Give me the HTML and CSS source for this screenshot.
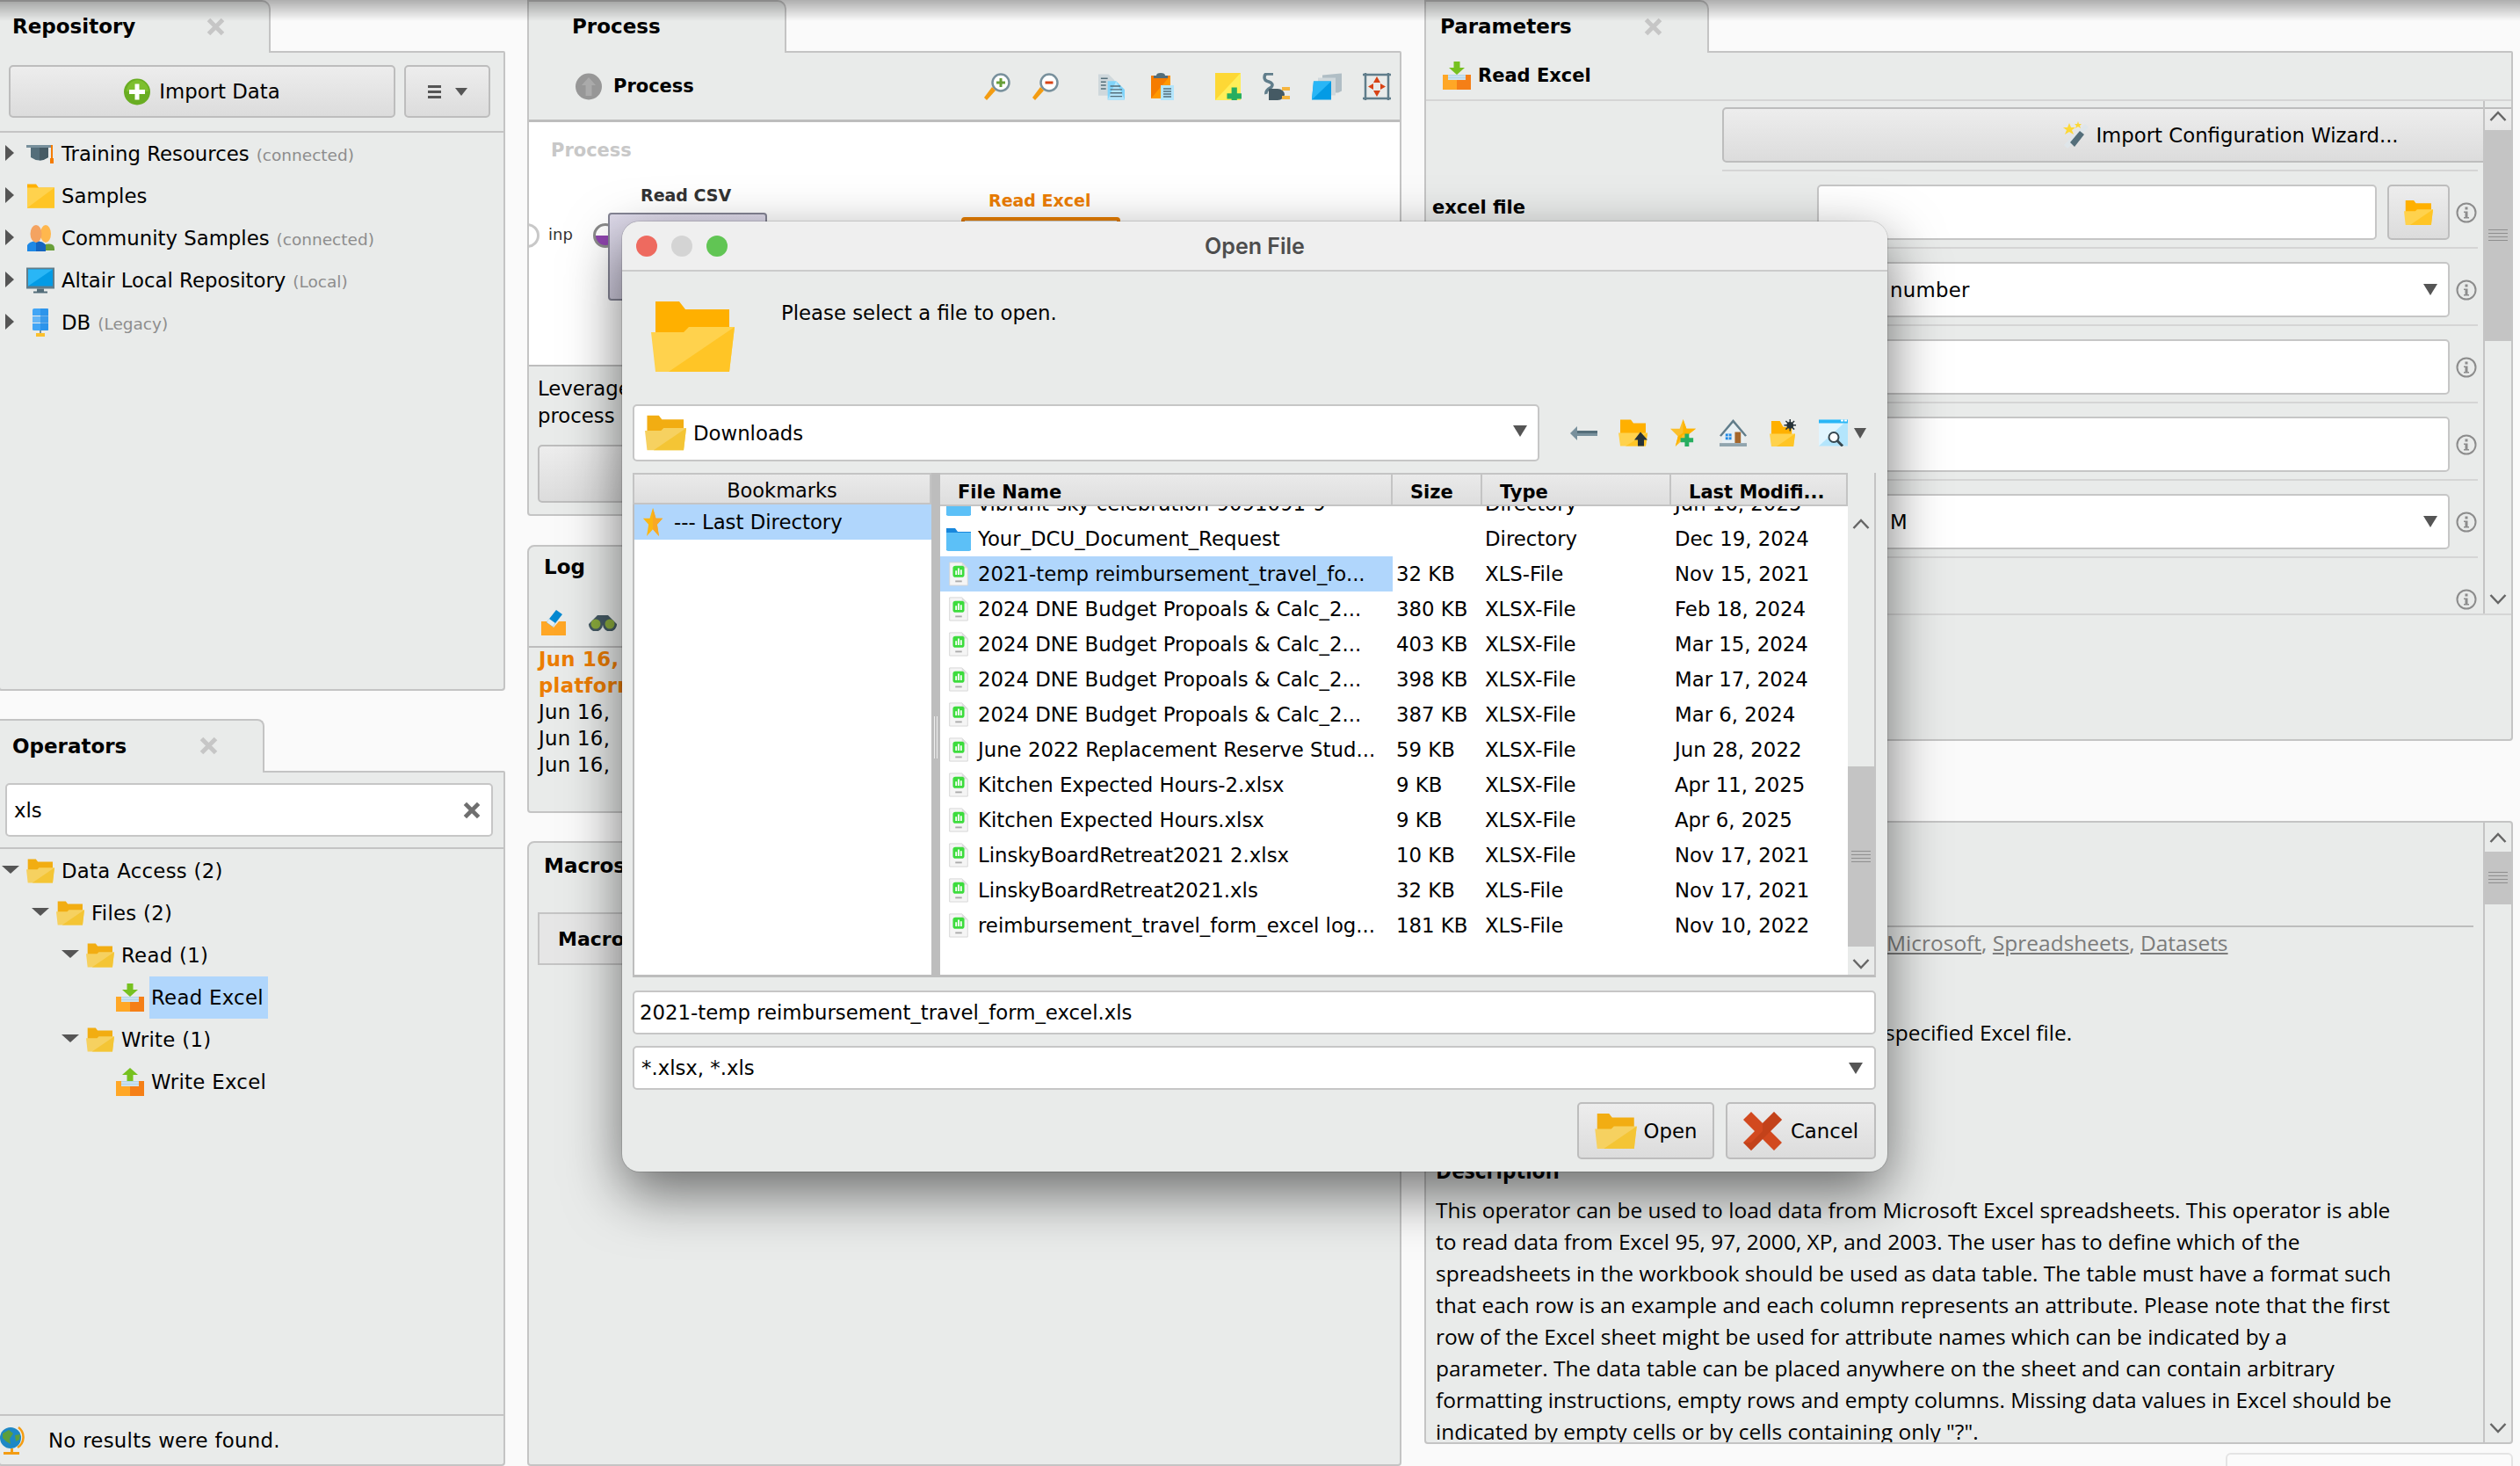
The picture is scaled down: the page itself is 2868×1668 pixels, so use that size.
FILE: index.html
```html
<!DOCTYPE html>
<html lang="en">
<head>
    <meta charset="UTF-8">
    <title>Open File</title>
    <link rel="stylesheet" href="styles.css">
</head>
<body>
<svg class="sprites" width="0" height="0">
    <symbol id="i-folder" viewBox="0 0 95 80"><path d="M5 0H32L39 9H89V40H5Z" fill="#ffb000"/><path d="M0 35H37L43 29H95L89 80H5Z" fill="#ffd24d"/><path d="M95 29L89 80H20Z" fill="#ffc526"/></symbol>
    <symbol id="i-folder-dim" viewBox="0 0 95 80"><path d="M5 0H32L39 9H89V40H5Z" fill="#f2ad12"/><path d="M0 35H37L43 29H95L89 80H5Z" fill="#f6d160"/><path d="M95 29L89 80H20Z" fill="#f4c535"/></symbol>
    <symbol id="i-folder-flat" viewBox="0 0 32 27"><path d="M1 0H11L14 4H32V27H1Z" fill="#ffb000"/><path d="M1 4H32V27H1Z" fill="#ffd24d"/><path d="M32 4V27H1Z" fill="#ffc526"/></symbol>
    <symbol id="i-folder-blue" viewBox="0 0 28 28"><path d="M0 2H10L13 6H28V27H0Z" fill="#1787dc"/><path d="M0 7H28V26Q28 28 26 28H2Q0 28 0 26Z" fill="#5cc0f7"/></symbol>
    <symbol id="i-plus" viewBox="0 0 30 31"><circle cx="15" cy="15.500" r="15" fill="#69ad22"/><path d="M15 2A13 13 0 0 1 28 15L3 15A13 13 0 0 1 15 2Z" fill="#7dbf2e"/><path d="M12.500 6.500h5v6.500h6.500v5h-6.500v6.500h-5v-6.500h-6.500v-5h6.500z" fill="#fff"/></symbol>
    <symbol id="i-cap" viewBox="0 0 32 22"><path d="M0 1H30V4H0Z" fill="#78909c"/><path d="M5 4H25V15Q15 22 5 15Z" fill="#546e7a"/><path d="M15 4H25V15Q20 18.500 15 18.500Z" fill="#455a64"/><path d="M28 1H30V16H31V22H27V16H28Z" fill="#f57c00"/></symbol>
    <symbol id="i-people" viewBox="0 0 32 30"><path d="M21 22Q32 20 32 27V29H19Z" fill="#689f38"/><ellipse cx="22" cy="10" rx="6" ry="10" fill="#ffb74d"/><path d="M1 30V23Q3 19 11 18Q20 19 22 23V30Z" fill="#1e88e5"/><path d="M11 18Q20 19 22 23V30H11Z" fill="#1565c0"/><ellipse cx="11" cy="10" rx="6.500" ry="10" fill="#f4a361"/></symbol>
    <symbol id="i-monitor" viewBox="0 0 32 29"><path d="M0 0H32V24H0Z" fill="#607d8b"/><path d="M2 2H30V21H2Z" fill="#039be5"/><path d="M2 2H30L2 21Z" fill="#29b6f6"/><path d="M12 24H20V27H24V29H8V27H12Z" fill="#546e7a"/></symbol>
    <symbol id="i-db" viewBox="0 0 18 32"><path d="M0 2Q0 0 2 0H16Q18 0 18 2V8H0Z" fill="#42a5f5"/><path d="M0 9H18V16H0Z" fill="#64b5f6"/><path d="M0 17H18V24Q18 25 16 25H2Q0 25 0 24Z" fill="#42a5f5"/><path d="M9 0H18V25H9Z" fill="#1e88e5" opacity=".6"/><path d="M8 25H10V28H8Z" fill="#78909c"/><path d="M4 28H14V32H4Z" fill="#fbc02d"/></symbol>
    <symbol id="i-close" viewBox="0 0 21 21"><path d="M2.500 2.500L18.500 18.500M18.500 2.500L2.500 18.500" stroke="currentColor" stroke-width="5"/></symbol>
    <symbol id="i-read" viewBox="0 0 32 32"><path d="M12.500 0H19.500V7H25L16 15L7 7H12.500Z" fill="#76c11f"/><path d="M5 15H27V22H5Z" fill="#b3d4e8"/><path d="M5 17H27M5 20H27" stroke="#e3eef5" stroke-width="1"/><path d="M0 15H6V21H16V32H0Z" fill="#ffa726"/><path d="M32 15H26V21H16V32H32Z" fill="#f57f17"/></symbol>
    <symbol id="i-write" viewBox="0 0 32 32"><path d="M16 0L25 8H19.500V15H12.500V8H7Z" fill="#76c11f"/><path d="M5 15H27V22H5Z" fill="#b3d4e8"/><path d="M5 17H27M5 20H27" stroke="#e3eef5" stroke-width="1"/><path d="M0 15H6V21H16V32H0Z" fill="#ffa726"/><path d="M32 15H26V21H16V32H32Z" fill="#f57f17"/></symbol>
    <symbol id="i-globe" viewBox="0 0 28 32"><circle cx="12" cy="13" r="12" fill="#1e88c5"/><path d="M3 8L10 4L15 8L11 14L12 20L7 17L3 13ZM17 10L23 9L22 15L18 17Z" fill="#5c9e3c"/><path d="M21 1A14 14 0 0 1 20 24" fill="none" stroke="#f39c12" stroke-width="2.500"/><path d="M4 29H22V32H4Z" fill="#f39c12"/><path d="M12 25H15V29H12Z" fill="#f39c12"/></symbol>
    <symbol id="i-up" viewBox="0 0 30 31"><circle cx="15" cy="15.500" r="15" fill="#979797"/><path d="M15 5L23 14H18.500V26H11.500V14H7Z" fill="#aaa"/></symbol>
    <symbol id="i-zoom-in" viewBox="0 0 30 31"><circle cx="19" cy="11" r="9.500" fill="#fff" stroke="#78909c" stroke-width="2.500"/><path d="M3 31L0 28L9 16L13 20Z" fill="#f39c12"/><path d="M17.500 6h3v3.500h3.500v3h-3.500v3.500h-3v-3.500h-3.500v-3h3.500z" fill="#689f38"/></symbol>
    <symbol id="i-zoom-out" viewBox="0 0 30 31"><circle cx="19" cy="11" r="9.500" fill="#fff" stroke="#78909c" stroke-width="2.500"/><path d="M3 31L0 28L9 16L13 20Z" fill="#f39c12"/><path d="M14.500 9.500h9v3h-9z" fill="#d84315"/></symbol>
    <symbol id="i-copy" viewBox="0 0 31 31"><path d="M0 1H12L19 8V26H0Z" fill="#cfd8dc"/><path d="M11 9H21L31 19V31H11Z" fill="#81d4fa"/><path d="M21 9L31 31H11Z" fill="#b3e5fc"/><path d="M3 6H11M3 10H9M3 14H9M3 18H9M14 15H26M14 19H28M14 23H28M14 27H28" stroke="#546e7a" stroke-width="1.500"/></symbol>
    <symbol id="i-paste" viewBox="0 0 26 31"><path d="M0 3H22V29H0Z" fill="#f57c00"/><path d="M22 3V29H0Z" fill="#ff9800"/><path d="M6 3Q6 0 11 0Q16 0 16 3H19V6H3V3Z" fill="#546e7a"/><path d="M11 14H26V31H11Z" fill="#b3e5fc"/><path d="M14 18H23M14 21H23M14 24H23M14 27H23" stroke="#546e7a" stroke-width="1.500"/></symbol>
    <symbol id="i-note" viewBox="0 0 29 30"><path d="M0 0H28V30H0Z" fill="#fdd835"/><path d="M28 0V30H0Z" fill="#ffee58"/><path d="M18 16h6v6.500h5v6h-5v1.500h-6v-1.500h-5v-6h5z" fill="#27ae60"/></symbol>
    <symbol id="i-plug" viewBox="0 0 32 31"><path d="M12 1H5Q2 1 2 5Q2 9 7 10Q13 12 10 16Q3 20 4 24" fill="none" stroke="#607d8b" stroke-width="3.500"/><path d="M7 18H17A8 6.500 0 0 1 17 31H7Z" fill="#455a64"/><path d="M22 16H31V20H22ZM22 26H31V30H22Z" fill="#f5b53f"/><path d="M14 20H22V28H14Z" fill="#455a64"/></symbol>
    <symbol id="i-layers" viewBox="0 0 34 30"><path d="M12 2L34 0V20L30 22H12Z" fill="#b0bec5"/><path d="M7 5H27V25H7Z" fill="#cfd8dc"/><path d="M2 9H22V30H0Z" fill="#039be5"/><path d="M2 9H22L0 30Z" fill="#29b6f6"/></symbol>
    <symbol id="i-fit" viewBox="0 0 32 31"><path d="M3 0V31M29 0V31M0 2H32M0 29H32" stroke="#607d8b" stroke-width="2.500" fill="none"/><path d="M16 4L20 11H12ZM16 27L12 20H20ZM6 15.500L12 12V19ZM26 15.500L20 19V12Z" fill="#d84315"/></symbol>
    <symbol id="i-eraser" viewBox="0 0 28 29"><path d="M0 13H8L14 20L20 13H28V29H0Z" fill="#ffa726"/><path d="M6 14L17 0L24 5L13 19Z" fill="#0288d1"/><path d="M6 14L9 10L16 15L13 19Z" fill="#e3edf2"/></symbol>
    <symbol id="i-binoc" viewBox="0 0 32 19"><path d="M10 1H22L32 11A8 8 0 1 1 16 12A8 8 0 1 1 0 11Z" fill="#455a64"/><circle cx="8" cy="11" r="5.500" fill="#8bab3d"/><circle cx="24" cy="11" r="5.500" fill="#8bab3d"/></symbol>
    <symbol id="i-xls" viewBox="0 0 24 30"><path d="M1 1H16L23 8V29H1Z" fill="#f5f5f5" stroke="#d5d5d5"/><path d="M16 1V8H23Z" fill="#ddd"/><rect x="5" y="5" width="14" height="14" rx="3" fill="#3ddc3d"/><path d="M8 11h2v5H8zM11 8h2v8h-2zM14 10h2v6h-2z" fill="#fff"/><path d="M8 24H16" stroke="#aaa" stroke-width="2"/></symbol>
    <symbol id="i-star" viewBox="0 0 32 46"><path d="M16 0L21 17L32 17L23 27L26 46L16 35L6 46L9 27L0 17L11 17Z" fill="#fbb713"/><path d="M16 0L21 17L32 17L23 27L26 46L16 35Z" fill="#f9a825"/></symbol>
    <symbol id="i-star-add" viewBox="0 0 32 32"><path d="M16 0L20 11H31L22 18L25 27L16 24L7 32L10 20L1 11H12Z" fill="#fbc02d"/><path d="M16 0L20 11H31L22 18H16L7 32L10 20L16 16Z" fill="#ffb300"/><path d="M18 17h5v5h5v5h-5v5h-5v-5h-5v-5h5z" fill="#27ae60"/></symbol>
    <symbol id="i-home" viewBox="0 0 32 32"><path d="M16 0L32 19L30 20.500L16 4L2 20.500L0 19Z" fill="#607d8b"/><path d="M16 5L29 20V28H3V20Z" fill="#e8f0f4"/><path d="M18 15H25V28H18Z" fill="#a5672c"/><path d="M7 17H14V24H7Z" fill="#1e88e5"/><path d="M7 20.500H14M10.500 17V24" stroke="#e8f0f4"/><path d="M0 28H32V32H0Z" fill="#90a4ae"/></symbol>
    <symbol id="i-folder-up" viewBox="0 0 33 30"><path d="M2 0H14L17 4H31V20H2Z" fill="#ffb000"/><path d="M0 15H33L31 30H2Z" fill="#ffd24d"/><path d="M33 15L31 30H8Z" fill="#ffc526"/><path d="M25 14L33 23H29V30H22V23H18Z" fill="#263238"/></symbol>
    <symbol id="i-folder-new" viewBox="0 0 32 32"><path d="M2 2H12L16 9H26V20H2Z" fill="#ffb000"/><path d="M0 17H30L28 32H2Z" fill="#ffd24d"/><path d="M30 17L28 32H8Z" fill="#ffc526"/><circle cx="24" cy="7" r="4" fill="#263238"/><path d="M24 0V14M17 7H31M19 2L29 12M29 2L19 12" stroke="#263238" stroke-width="1.500"/></symbol>
    <symbol id="i-view" viewBox="0 0 33 30"><path d="M0 0H33V30H0Z" fill="#b3e5fc"/><path d="M0 0H33L0 30Z" fill="#e1f5fe"/><path d="M0 0H33V4H0Z" fill="#29b6f6"/><path d="M25 1H28M29 1H32" stroke="#fff" stroke-width="2"/><circle cx="17" cy="20" r="5.500" fill="#fff" stroke="#37474f" stroke-width="2"/><path d="M21 24L27 30" stroke="#37474f" stroke-width="3"/></symbol>
    <symbol id="i-back" viewBox="0 0 31 16"><path d="M8 0V5H31V11H8V16L0 8Z" fill="#78909c"/><path d="M8 5H31V8H8Z" fill="#546e7a"/></symbol>
    <symbol id="i-wand" viewBox="0 0 30 32"><path d="M5 31L1 27L25 3L29 7Z" fill="#dfe6ea"/><path d="M8 24L13 29L24 15L19 11Z" fill="#546e7a"/><path d="M7 2L9 7H14L10 10L12 15L7 12L2 15L4 10L0 7H5Z" fill="#fdd835"/><path d="M17 0L18 3H21L19 5L20 8L17 6L14 8L15 5L13 3H16Z" fill="#fdd835"/></symbol>
    <symbol id="i-info" viewBox="0 0 24 24"><circle cx="12" cy="12" r="10.500" fill="none" stroke="#8c8c8c" stroke-width="2"/><path d="M10.500 5.500h3v3h-3zM9 10.500h4.500v6.500h1.500v1.500H9V17h1.500v-5H9z" fill="#8c8c8c"/></symbol>
    <symbol id="i-cancel" viewBox="0 0 44 44"><path d="M0 9L9 0L22 13L35 0L44 9L31 22L44 35L35 44L22 31L9 44L0 35L13 22Z" fill="#d2491f"/><path d="M22 13L35 0L44 9L9 44L0 35L9 35L22 22Z" fill="#b63c16" opacity=".55"/></symbol>
    <symbol id="i-up-chev" viewBox="0 0 20 12"><path d="M1.500 11L10 2L18.500 11" fill="none" stroke="#666" stroke-width="2.500"/></symbol>
    <symbol id="i-down-chev" viewBox="0 0 20 12"><path d="M1.500 1L10 10L18.500 1" fill="none" stroke="#666" stroke-width="2.500"/></symbol>
</svg>

<div class="top-shade"></div>

<div class="app">
    <!-- left column -->
    <div class="col">
        <section class="panel repo">
            <div class="tabs">
                <div class="tab tab-repo"><span>Repository</span><svg class="close"><use href="#i-close"/></svg></div>
                <div class="tab-rest"></div>
            </div>
            <div class="panel-body">
                <div class="repo-bar">
                    <button class="btn btn-import"><svg class="ic-plus"><use href="#i-plus"/></svg>Import Data</button>
                    <button class="btn btn-menu"><span class="burger"></span><span class="caret"></span></button>
                </div>
                <ul class="tree repo-tree">
                    <li><span class="caret-right"></span><svg class="ic-repo"><use href="#i-cap"/></svg>Training Resources <em>(connected)</em></li>
                    <li><span class="caret-right"></span><svg class="ic-repo"><use href="#i-folder-flat"/></svg>Samples</li>
                    <li><span class="caret-right"></span><svg class="ic-repo"><use href="#i-people"/></svg>Community Samples <em>(connected)</em></li>
                    <li><span class="caret-right"></span><svg class="ic-repo"><use href="#i-monitor"/></svg>Altair Local Repository <em>(Local)</em></li>
                    <li><span class="caret-right"></span><svg class="ic-repo"><use href="#i-db"/></svg>DB <em>(Legacy)</em></li>
                </ul>
            </div>
        </section>

        <section class="panel operators">
            <div class="tabs">
                <div class="tab tab-ops"><span>Operators</span><svg class="close"><use href="#i-close"/></svg></div>
                <div class="tab-rest"></div>
            </div>
            <div class="panel-body">
                <div class="search-bar">
                    <div class="field search"><span>xls</span><svg class="search-clear"><use href="#i-close"/></svg></div>
                </div>
                <ul class="tree op-tree">
                    <li class="lv0"><span class="tree-caret"></span><svg class="ic-tree"><use href="#i-folder-dim"/></svg>Data Access (2)</li>
                    <li class="lv1"><span class="tree-caret"></span><svg class="ic-tree"><use href="#i-folder-dim"/></svg>Files (2)</li>
                    <li class="lv2"><span class="tree-caret"></span><svg class="ic-tree"><use href="#i-folder-dim"/></svg>Read (1)</li>
                    <li class="leaf"><svg class="ic-tree"><use href="#i-read"/></svg><span class="leaf-label selected">Read Excel</span></li>
                    <li class="lv2"><span class="tree-caret"></span><svg class="ic-tree"><use href="#i-folder-dim"/></svg>Write (1)</li>
                    <li class="leaf"><svg class="ic-tree"><use href="#i-write"/></svg><span class="leaf-label">Write Excel</span></li>
                </ul>
                <div class="status"><svg class="ic-globe"><use href="#i-globe"/></svg>No results were found.</div>
            </div>
        </section>
    </div>

    <!-- centre column -->
    <div class="col">
        <section class="panel process">
            <div class="tabs">
                <div class="tab tab-process"><span>Process</span></div>
                <div class="tab-rest"></div>
            </div>
            <div class="panel-body">
                <div class="process-bar">
                    <svg class="ic-up"><use href="#i-up"/></svg>
                    <strong>Process</strong>
                    <div class="tool-group first">
                        <svg class="tool"><use href="#i-zoom-in"/></svg>
                        <svg class="tool"><use href="#i-zoom-out"/></svg>
                    </div>
                    <div class="tool-group second">
                        <svg class="tool"><use href="#i-copy"/></svg>
                        <svg class="tool w26"><use href="#i-paste"/></svg>
                    </div>
                    <div class="tool-group third">
                        <svg class="tool"><use href="#i-note"/></svg>
                        <svg class="tool w32"><use href="#i-plug"/></svg>
                        <svg class="tool w34"><use href="#i-layers"/></svg>
                        <svg class="tool w32"><use href="#i-fit"/></svg>
                    </div>
                </div>
                <div class="canvas">
                    <div class="canvas-title">Process</div>
                    <div class="node-label label-csv">Read CSV</div>
                    <div class="node-label label-excel">Read Excel</div>
                    <div class="port port-inp"></div>
                    <div class="port-text">inp</div>
                    <div class="port port-out"></div>
                    <div class="node node-csv"></div>
                    <div class="node node-excel"></div>
                </div>
                <div class="hint">
                    <p>Leverage<br>process</p>
                    <div class="btn hint-btn"></div>
                </div>
            </div>
        </section>

        <section class="panel log">
            <div class="plain-title">Log</div>
            <div class="log-tools">
                <svg class="ic-eraser"><use href="#i-eraser"/></svg>
                <svg class="ic-binoc"><use href="#i-binoc"/></svg>
            </div>
            <div class="log-lines">
                <div class="warn">Jun 16,</div>
                <div class="warn">platform</div>
                <div>Jun 16,</div>
                <div>Jun 16,</div>
                <div>Jun 16,</div>
            </div>
        </section>

        <section class="panel macros">
            <div class="plain-title">Macros</div>
            <div class="macro-head">Macro</div>
        </section>
    </div>

    <!-- right column -->
    <div class="col">
        <section class="panel parameters">
            <div class="tabs">
                <div class="tab tab-params"><span>Parameters</span><svg class="close"><use href="#i-close"/></svg></div>
                <div class="tab-rest"></div>
            </div>
            <div class="panel-body">
                <div class="param-head"><svg class="ic-tree"><use href="#i-read"/></svg><strong>Read Excel</strong></div>
                <div class="param-area">
                    <div class="param-list">
                        <div class="param-row first">
                            <button class="btn btn-wizard"><svg class="ic-wand"><use href="#i-wand"/></svg>Import Configuration Wizard...</button>
                            <svg class="ic-info"><use href="#i-info"/></svg>
                        </div>
                        <div class="param-row">
                            <label>excel file</label>
                            <div class="control-pair">
                                <div class="field"></div>
                                <button class="btn btn-browse"><svg class="ic-browse"><use href="#i-folder"/></svg></button>
                            </div>
                            <svg class="ic-info"><use href="#i-info"/></svg>
                        </div>
                        <div class="param-row">
                            <label></label>
                            <div class="field select"><span class="select-text">number</span><span class="caret"></span></div>
                            <svg class="ic-info"><use href="#i-info"/></svg>
                        </div>
                        <div class="param-row">
                            <label></label>
                            <div class="field"></div>
                            <svg class="ic-info"><use href="#i-info"/></svg>
                        </div>
                        <div class="param-row">
                            <label></label>
                            <div class="field"></div>
                            <svg class="ic-info"><use href="#i-info"/></svg>
                        </div>
                        <div class="param-row">
                            <label></label>
                            <div class="field select"><span class="select-text">M</span><span class="caret"></span></div>
                            <svg class="ic-info"><use href="#i-info"/></svg>
                        </div>
                        <div class="param-row">
                            <label></label>
                            <div class="no-control"></div>
                            <svg class="ic-info"><use href="#i-info"/></svg>
                        </div>
                    </div>
                    <div class="scrollbar">
                        <div class="sb-btn"><svg><use href="#i-up-chev"/></svg></div>
                        <div class="sb-thumb thumb-params"><span class="grip"></span></div>
                        <div class="sb-btn sb-end"><svg><use href="#i-down-chev"/></svg></div>
                    </div>
                </div>
            </div>
        </section>

        <section class="panel help">
            <div class="help-text">
                <div class="help-rule"></div>
                <div class="help-tags"><a>Microsoft</a>, <a>Spreadsheets</a>, <a>Datasets</a></div>
                <p class="help-synopsis">This operator reads an ExampleSet from the specified Excel file.</p>
                <h4>Description</h4>
                <p class="help-body">This operator can be used to load data from Microsoft Excel spreadsheets. This operator is able<br>
                to read data from Excel 95, 97, 2000, XP, and 2003. The user has to define which of the<br>
                spreadsheets in the workbook should be used as data table. The table must have a format such<br>
                that each row is an example and each column represents an attribute. Please note that the first<br>
                row of the Excel sheet might be used for attribute names which can be indicated by a<br>
                parameter. The data table can be placed anywhere on the sheet and can contain arbitrary<br>
                formatting instructions, empty rows and empty columns. Missing data values in Excel should be<br>
                indicated by empty cells or by cells containing only "?".</p>
            </div>
            <div class="scrollbar">
                <div class="sb-btn"><svg><use href="#i-up-chev"/></svg></div>
                <div class="sb-thumb thumb-help"><span class="grip"></span></div>
                <div class="sb-btn sb-end"><svg><use href="#i-down-chev"/></svg></div>
            </div>
        </section>

        <div class="corner-box"></div>
    </div>
</div>

<!-- file dialog -->
<div class="dialog">
    <div class="dlg-title">
        <span class="light red"></span><span class="light grey"></span><span class="light green"></span>
        <span class="dlg-title-text">Open File</span>
    </div>
    <div class="dlg-body">
        <div class="dlg-head">
            <svg class="ic-big"><use href="#i-folder"/></svg>
            <p>Please select a file to open.</p>
        </div>
        <div class="dlg-path">
            <div class="field path-combo"><svg class="ic-path"><use href="#i-folder-dim"/></svg><span>Downloads</span><span class="caret"></span></div>
            <div class="path-tools">
                <svg class="pt-back"><use href="#i-back"/></svg>
                <svg class="pt"><use href="#i-folder-up"/></svg>
                <svg class="pt"><use href="#i-star-add"/></svg>
                <svg class="pt"><use href="#i-home"/></svg>
                <svg class="pt"><use href="#i-folder-new"/></svg>
                <svg class="pt"><use href="#i-view"/></svg>
                <span class="caret"></span>
            </div>
        </div>
        <div class="dlg-split">
            <div class="bookmarks">
                <div class="bm-head">Bookmarks</div>
                <div class="bm-list">
                    <div class="bm-row"><svg class="ic-star"><use href="#i-star"/></svg>--- Last Directory</div>
                </div>
            </div>
            <div class="splitter"><span></span></div>
            <div class="files">
                <div class="file-head">
                    <div class="h-name">File Name</div>
                    <div class="h-size">Size</div>
                    <div class="h-type">Type</div>
                    <div class="h-date">Last Modifi...</div>
                </div>
                <div class="file-rows">
                    <div class="file-row scrolled"><div class="c-name"><svg class="ic-file"><use href="#i-folder-blue"/></svg>vibrant-sky-celebration-9091091-9</div><div class="c-size"></div><div class="c-type">Directory</div><div class="c-date">Jun 16, 2025</div></div>
                    <div class="file-row"><div class="c-name"><svg class="ic-file"><use href="#i-folder-blue"/></svg>Your_DCU_Document_Request</div><div class="c-size"></div><div class="c-type">Directory</div><div class="c-date">Dec 19, 2024</div></div>
                    <div class="file-row selected"><div class="c-name"><svg class="ic-file"><use href="#i-xls"/></svg>2021-temp reimbursement_travel_fo...</div><div class="c-size">32 KB</div><div class="c-type">XLS-File</div><div class="c-date">Nov 15, 2021</div></div>
                    <div class="file-row"><div class="c-name"><svg class="ic-file"><use href="#i-xls"/></svg>2024 DNE Budget Propoals &amp; Calc_2...</div><div class="c-size">380 KB</div><div class="c-type">XLSX-File</div><div class="c-date">Feb 18, 2024</div></div>
                    <div class="file-row"><div class="c-name"><svg class="ic-file"><use href="#i-xls"/></svg>2024 DNE Budget Propoals &amp; Calc_2...</div><div class="c-size">403 KB</div><div class="c-type">XLSX-File</div><div class="c-date">Mar 15, 2024</div></div>
                    <div class="file-row"><div class="c-name"><svg class="ic-file"><use href="#i-xls"/></svg>2024 DNE Budget Propoals &amp; Calc_2...</div><div class="c-size">398 KB</div><div class="c-type">XLSX-File</div><div class="c-date">Mar 17, 2024</div></div>
                    <div class="file-row"><div class="c-name"><svg class="ic-file"><use href="#i-xls"/></svg>2024 DNE Budget Propoals &amp; Calc_2...</div><div class="c-size">387 KB</div><div class="c-type">XLSX-File</div><div class="c-date">Mar 6, 2024</div></div>
                    <div class="file-row"><div class="c-name"><svg class="ic-file"><use href="#i-xls"/></svg>June 2022 Replacement Reserve Stud...</div><div class="c-size">59 KB</div><div class="c-type">XLSX-File</div><div class="c-date">Jun 28, 2022</div></div>
                    <div class="file-row"><div class="c-name"><svg class="ic-file"><use href="#i-xls"/></svg>Kitchen Expected Hours-2.xlsx</div><div class="c-size">9 KB</div><div class="c-type">XLSX-File</div><div class="c-date">Apr 11, 2025</div></div>
                    <div class="file-row"><div class="c-name"><svg class="ic-file"><use href="#i-xls"/></svg>Kitchen Expected Hours.xlsx</div><div class="c-size">9 KB</div><div class="c-type">XLSX-File</div><div class="c-date">Apr 6, 2025</div></div>
                    <div class="file-row"><div class="c-name"><svg class="ic-file"><use href="#i-xls"/></svg>LinskyBoardRetreat2021 2.xlsx</div><div class="c-size">10 KB</div><div class="c-type">XLSX-File</div><div class="c-date">Nov 17, 2021</div></div>
                    <div class="file-row"><div class="c-name"><svg class="ic-file"><use href="#i-xls"/></svg>LinskyBoardRetreat2021.xls</div><div class="c-size">32 KB</div><div class="c-type">XLS-File</div><div class="c-date">Nov 17, 2021</div></div>
                    <div class="file-row"><div class="c-name"><svg class="ic-file"><use href="#i-xls"/></svg>reimbursement_travel_form_excel log...</div><div class="c-size">181 KB</div><div class="c-type">XLS-File</div><div class="c-date">Nov 10, 2022</div></div>
                </div>
            </div>
            <div class="scrollbar dlg-scroll">
                <div class="sb-btn"><svg><use href="#i-up-chev"/></svg></div>
                <div class="sb-thumb thumb-dlg"><span class="grip"></span></div>
                <div class="sb-btn sb-end"><svg><use href="#i-down-chev"/></svg></div>
            </div>
        </div>
        <div class="field dlg-name">2021-temp reimbursement_travel_form_excel.xls</div>
        <div class="field dlg-filter"><span>*.xlsx, *.xls</span><span class="caret"></span></div>
        <div class="dlg-actions">
            <button class="btn btn-open"><svg class="ic-btn"><use href="#i-folder-dim"/></svg>Open</button>
            <button class="btn btn-cancel"><svg class="ic-x"><use href="#i-cancel"/></svg>Cancel</button>
        </div>
    </div>
</div>
</body>
</html>
```

FILE: styles.css
```css
* {
    box-sizing: border-box;
}

body {
    margin: 0;
    width: 2868px;
    height: 1668px;
    overflow: hidden;
    background-color: #fafafa;
    color: #000;
    font-family: "DejaVu Sans", sans-serif;
    font-size: 22.8px;
}

button {
    font: inherit;
    color: inherit;
}

ul {
    list-style: none;
    margin: 0;
    padding: 0;
}

p {
    margin: 0;
}

svg {
    display: block;
    flex: none;
}

.sprites {
    position: absolute;
}

.top-shade {
    position: fixed;
    left: 0;
    top: 0;
    width: 100%;
    height: 24px;
    z-index: 5;
    pointer-events: none;
    background: linear-gradient(rgba(0, 0, 0, 0.3), rgba(0, 0, 0, 0));
}

.app {
    display: grid;
    grid-template-columns: 577px 995px 1240px;
    column-gap: 25px;
    height: 1668px;
    margin-left: -2px;
}

.col {
    display: flex;
    flex-direction: column;
    padding-bottom: 25px;
    min-width: 0;
}

.col:last-child {
    padding-bottom: 0;
    margin-left: 1px;
}

/* panels and tabs */
.panel {
    display: flex;
    flex-direction: column;
    min-height: 0;
}

.tabs {
    display: flex;
    height: 60px;
    flex: none;
}

.tab {
    display: flex;
    align-items: center;
    justify-content: space-between;
    height: 60px;
    padding-bottom: 2px;
    background-color: #e9ebea;
    border: 2px solid #c4c4c4;
    border-bottom: none;
    border-radius: 0 10px 0 0;
    font-weight: bold;
    font-size: 23px;
}

.tab-rest {
    flex: 1;
    height: 2px;
    align-self: flex-end;
    background-color: #c4c4c4;
    border-radius: 0 4px 0 0;
}

.close {
    width: 21px;
    height: 21px;
    color: #c6c6c6;
}

.tab-repo {
    width: 310px;
    padding: 0 50px 2px 14px;
}

.tab-ops {
    width: 303px;
    padding: 0 51px 2px 14px;
}

.tab-process {
    width: 295px;
    padding: 0 0 2px 49px;
}

.tab-params {
    width: 324px;
    padding: 0 51px 2px 16px;
}

.panel-body {
    flex: 1;
    display: flex;
    flex-direction: column;
    min-height: 0;
    background-color: #e9ebea;
    border: 2px solid #c4c4c4;
    border-top: none;
    border-radius: 0 0 4px 4px;
}

/* shared controls */
.btn {
    display: flex;
    align-items: center;
    justify-content: center;
    padding: 0;
    background: linear-gradient(#ededed, #dcdcdc);
    border: 2px solid #bdbdbd;
    border-radius: 5px;
}

.field {
    display: flex;
    align-items: center;
    background-color: #fff;
    border: 2px solid #c6c6c6;
    border-radius: 5px;
}

.caret {
    display: block;
    flex: none;
    width: 0;
    height: 0;
    border-left: 8px solid transparent;
    border-right: 8px solid transparent;
    border-top: 13px solid #555;
}

.scrollbar {
    display: flex;
    flex-direction: column;
    flex: none;
    width: 32px;
    border-left: 2px solid #c4c4c4;
}

.sb-btn {
    display: flex;
    align-items: center;
    justify-content: center;
    height: 33px;
    flex: none;
}

.sb-btn svg {
    width: 20px;
    height: 12px;
}

.sb-end {
    margin-top: auto;
}

.sb-thumb {
    display: flex;
    align-items: center;
    justify-content: center;
    background-color: #c4c4c4;
    flex: none;
}

.grip {
    display: block;
    width: 22px;
    height: 14px;
    background: repeating-linear-gradient(#8f8f8f 0, #8f8f8f 1px, transparent 1px, transparent 4px);
}

/* repository */
.repo {
    height: 786px;
    flex: none;
}

.repo-bar {
    display: flex;
    gap: 10px;
    height: 91px;
    flex: none;
    padding: 14px 0 0 10px;
    border-bottom: 2px solid #c4c4c4;
}

.btn-import {
    width: 440px;
    height: 60px;
}

.ic-plus {
    width: 30px;
    height: 31px;
    margin-right: 10px;
}

.btn-menu {
    width: 98px;
    height: 60px;
    gap: 16px;
}

.burger {
    display: block;
    width: 15px;
    height: 15px;
    background: repeating-linear-gradient(#555 0, #555 3px, transparent 3px, transparent 6px);
}

.btn-menu .caret {
    border-left-width: 7px;
    border-right-width: 7px;
    border-top-width: 9px;
}

.tree li {
    display: flex;
    align-items: center;
    height: 48px;
    white-space: nowrap;
}

.repo-tree li {
    padding-left: 6px;
}

.tree em {
    font-style: normal;
    font-size: 18.5px;
    color: #8d8d8d;
    margin-left: 8px;
    padding-top: 2px;
}

.caret-right {
    display: block;
    flex: none;
    width: 0;
    height: 0;
    border-top: 9px solid transparent;
    border-bottom: 9px solid transparent;
    border-left: 10px solid #555;
    margin: -2px 14px 0 0;
}

.ic-repo {
    width: 32px;
    height: 32px;
    margin-right: 8px;
}

/* operators */
.operators {
    flex: 1;
    margin-top: 32px;
}

.operators .tabs,
.operators .tab {
    height: 61px;
}

.tab-ops {
    border-top-right-radius: 8px;
}

.search-bar {
    padding: 12px 12px 12px 6px;
    border-bottom: 2px solid #c4c4c4;
    flex: none;
}

.search {
    justify-content: space-between;
    height: 61px;
    padding: 0 12px 0 8px;
}

.search-clear {
    width: 20px;
    height: 20px;
    color: #6f6f6f;
}

.op-tree {
    flex: 1;
    padding-top: 1px;
}

.op-tree li {
    letter-spacing: 0.3px;
}

.tree-caret {
    display: block;
    flex: none;
    width: 0;
    height: 0;
    margin: -3px 8px 0 0;
    border-left: 10px solid transparent;
    border-right: 10px solid transparent;
    border-top: 9px solid #555;
}

.ic-tree {
    width: 32px;
    height: 32px;
    margin-right: 8px;
}

.lv0 {
    padding-left: 2px;
}

.lv1 {
    padding-left: 36px;
}

.lv2 {
    padding-left: 70px;
}

.leaf {
    padding-left: 132px;
}

.leaf .ic-tree {
    margin-right: 6px;
}

.leaf-label {
    display: flex;
    align-items: center;
    height: 48px;
    padding: 0 5px 0 2px;
}

.leaf-label.selected {
    background-color: #b0d6fc;
}

.status {
    display: flex;
    align-items: center;
    height: 57px;
    flex: none;
    border-top: 2px solid #c4c4c4;
    letter-spacing: 0.3px;
}

.ic-globe {
    width: 28px;
    height: 32px;
    margin-right: 27px;
}

/* process */
.process {
    height: 587px;
    flex: none;
}

.process-bar {
    display: flex;
    align-items: center;
    height: 79px;
    flex: none;
    padding: 0 0 0 53px;
    border-bottom: 3px solid #bdbdbd;
}

.process-bar strong {
    font-size: 21px;
}

.ic-up {
    width: 30px;
    height: 31px;
    margin-right: 13px;
}

.tool-group {
    display: flex;
    align-items: center;
}

.tool {
    width: 30px;
    height: 31px;
}

.tool.w26 {
    width: 26px;
}

.tool.w32 {
    width: 32px;
}

.tool.w34 {
    width: 34px;
}

.first {
    margin-left: 330px;
    gap: 25px;
}

.second {
    margin-left: 45px;
    gap: 30px;
}

.third {
    margin-left: 47px;
    gap: 24px;
}

.canvas {
    position: relative;
    height: 278px;
    flex: none;
    overflow: hidden;
    background-color: #fff;
    border-bottom: 2px solid #bdbdbd;
}

.canvas-title {
    padding: 20px 0 0 25px;
    font-size: 21px;
    font-weight: bold;
    color: #c8c8c8;
}

.node-label {
    position: absolute;
    font-size: 19px;
    font-weight: bold;
    line-height: 28px;
    color: #333;
}

.label-csv {
    left: 127px;
    top: 69px;
}

.label-excel {
    left: 523px;
    top: 75px;
    color: #ec7d00;
}

.port {
    position: absolute;
    top: 115px;
    width: 28px;
    height: 28px;
    border-radius: 50%;
    border: 3px solid #c8c8c8;
    background-color: #fff;
}

.port-inp {
    left: -16px;
}

.port-out {
    left: 73px;
    border-color: #8a8a8a;
    background: linear-gradient(#fff 50%, #8e44ad 50%);
}

.port-text {
    position: absolute;
    left: 22px;
    top: 116px;
    font-size: 18px;
    line-height: 24px;
    color: #333;
}

.node {
    position: absolute;
    width: 181px;
    height: 100px;
    border-radius: 4px;
    background: linear-gradient(#dedaea, #cfcbdd);
}

.node-csv {
    left: 90px;
    top: 103px;
    border: 2px solid #858595;
}

.node-excel {
    left: 492px;
    top: 108px;
    border: 4px solid #e67e00;
    background: #eee;
}

.hint {
    flex: 1;
    padding: 10px 0 0 10px;
    font-size: 22.8px;
}

.hint p {
    line-height: 31px;
    height: 79px;
}

.hint-btn {
    height: 66px;
    width: 400px;
}

/* log */
.log {
    height: 305px;
    flex: none;
    margin-top: 33px;
    background-color: #e9ebea;
    border: 2px solid #c4c4c4;
    border-radius: 8px 8px 4px 4px;
}

.plain-title {
    height: 58px;
    flex: none;
    padding: 10px 0 0 17px;
    font-size: 23px;
    font-weight: bold;
}

.log-tools {
    display: flex;
    align-items: flex-end;
    gap: 26px;
    height: 57px;
    flex: none;
    padding: 0 0 12px 14px;
    border-bottom: 2px solid #bdbdbd;
}

.ic-eraser {
    width: 28px;
    height: 29px;
}

.ic-binoc {
    width: 32px;
    height: 19px;
    margin-bottom: 5px;
}

.log-lines {
    margin-top: -2px;
    padding-left: 11px;
    line-height: 30px;
    letter-spacing: 0.3px;
    white-space: nowrap;
}

.warn {
    font-weight: bold;
    color: #ec7d00;
}

/* macros */
.macros {
    flex: 1;
    margin-top: 32px;
    background-color: #e9ebea;
    border: 2px solid #c4c4c4;
    border-radius: 8px 8px 4px 4px;
}

.macros .plain-title {
    height: 79px;
    padding-top: 13px;
}

.macro-head {
    display: flex;
    align-items: center;
    height: 60px;
    margin-left: 10px;
    padding-left: 21px;
    background-color: #e6e6e6;
    border: 2px solid #c4c4c4;
    font-weight: bold;
    font-size: 22px;
}

/* parameters */
.parameters {
    height: 843px;
    flex: none;
}

.param-head {
    display: flex;
    align-items: center;
    height: 55px;
    flex: none;
    padding: 0 0 2px 19px;
    border-bottom: 2px solid #d5d5d5;
    font-size: 21px;
}

.param-area {
    display: flex;
    justify-content: space-between;
    height: 585px;
    flex: none;
    overflow: hidden;
    border-bottom: 2px solid #d5d5d5;
}

.param-list {
    width: 1197px;
    padding-left: 7px;
}

.param-row {
    display: grid;
    grid-template-columns: 438px 720px 32px;
    align-items: center;
    padding: 15px 0 8px;
    border-bottom: 2px solid #d5d5d5;
}

.param-row.first {
    grid-template-columns: 1158px 32px;
    padding: 7px 0 8px;
}

.param-row label {
    font-size: 21px;
    font-weight: bold;
    align-self: start;
    margin-top: 14px;
}

.param-row .field,
.no-control {
    height: 63px;
}

.ic-info {
    width: 24px;
    height: 24px;
    margin-left: 7px;
}

.btn-wizard {
    height: 63px;
}

.ic-wand {
    width: 30px;
    height: 32px;
    margin-right: 7px;
}

.control-pair {
    display: flex;
    gap: 12px;
}

.control-pair .field {
    flex: 1;
}

.btn-browse {
    width: 71px;
    height: 63px;
    flex: none;
}

.ic-browse {
    width: 33px;
    height: 28px;
}

.select {
    justify-content: space-between;
    padding: 0 12px 0 81px;
}

.select-text {
    letter-spacing: 0.3px;
}

.thumb-params {
    height: 240px;
}

/* help */
.help {
    height: 709px;
    flex: none;
    margin-top: 91px;
    flex-direction: row;
    justify-content: space-between;
    background-color: #e9ebea;
    border: 2px solid #c4c4c4;
    border-radius: 4px;
    overflow: hidden;
    font-family: "Open Sans", sans-serif;
    font-size: 24.5px;
    line-height: 36px;
}

.help-text {
    width: 1192px;
    padding: 117px 0 0 11px;
    white-space: nowrap;
}

.help-rule {
    height: 2px;
    background-color: #bdbdbd;
}

.help-tags {
    padding: 0 0 0 513px;
    margin-top: 1px;
    height: 32px;
    line-height: 34px;
    color: #7b7b7b;
}

.help-tags a {
    text-decoration: underline;
}

.help-synopsis {
    margin-top: 69px;
}

.help h4 {
    margin: 121px 0 9px;
    font-size: 24.5px;
    font-weight: bold;
}

.thumb-help {
    height: 60px;
}

.corner-box {
    width: 327px;
    height: 40px;
    margin-top: 10px;
    align-self: flex-end;
    background-color: #fbfbfb;
    border: 2px solid #e4e4e4;
    border-radius: 6px 6px 0 0;
}

/* dialog */
.dialog {
    position: absolute;
    left: 708px;
    top: 252px;
    z-index: 10;
    width: 1440px;
    height: 1081px;
    background-color: #e9ebea;
    border-radius: 20px;
    box-shadow: 0 24px 64px rgba(0, 0, 0, 0.55), 0 0 0 1px rgba(0, 0, 0, 0.12);
    overflow: hidden;
}

.dlg-title {
    display: flex;
    align-items: center;
    gap: 16px;
    height: 57px;
    padding-left: 16px;
    background-color: #efefef;
    border-bottom: 2px solid #cbcbcb;
}

.light {
    display: block;
    width: 24px;
    height: 24px;
    border-radius: 50%;
}

.light.red {
    background-color: #ee6a5f;
}

.light.grey {
    background-color: #d4d4d4;
}

.light.green {
    background-color: #61c554;
}

.dlg-title-text {
    position: absolute;
    left: 0;
    width: 100%;
    text-align: center;
    font-family: Inter, sans-serif;
    font-weight: 600;
    font-size: 25px;
    color: #4d4d4d;
}

.dlg-body {
    padding: 0 13px 0 12px;
}

.dlg-head {
    display: flex;
    height: 151px;
    padding: 34px 0 0 21px;
}

.ic-big {
    width: 95px;
    height: 80px;
    margin-right: 53px;
}

.dlg-head p {
    line-height: 28px;
    margin-top: -1px;
}

.dlg-path {
    display: flex;
    align-items: center;
}

.path-combo {
    width: 1032px;
    height: 65px;
    padding: 0 12px;
}

.ic-path {
    width: 47px;
    height: 41px;
    margin-right: 8px;
}

.path-combo .caret {
    margin-left: auto;
    margin-top: -4px;
}

.path-tools {
    display: flex;
    align-items: center;
    margin-left: 35px;
    gap: 24px;
}

.pt-back {
    width: 31px;
    height: 16px;
}

.pt {
    width: 33px;
    height: 31px;
}

.path-tools .caret {
    margin-left: -17px;
    border-left-width: 7.500px;
    border-right-width: 7.500px;
    border-top-width: 12px;
}

.dlg-split {
    display: flex;
    height: 574px;
    margin-top: 13px;
}

.bookmarks {
    display: flex;
    flex-direction: column;
    width: 340px;
}

.bm-head {
    height: 36px;
    flex: none;
    line-height: 36px;
    text-align: center;
    background: linear-gradient(#eaeaea, #dedede);
    border: 2px solid #c4c4c4;
    font-size: 22.5px;
}

.bm-list {
    flex: 1;
    background-color: #fff;
    border-left: 2px solid #bdbdbd;
    border-bottom: 3px solid #bdbdbd;
}

.bm-row {
    display: flex;
    align-items: center;
    height: 40px;
    background-color: #b0d6fc;
    padding-left: 5px;
}

.ic-star {
    width: 32px;
    height: 32px;
    margin-right: 8px;
}

.splitter {
    display: flex;
    align-items: center;
    justify-content: center;
    width: 10px;
    flex: none;
    background-color: #bdbdbd;
}

.splitter span {
    display: block;
    width: 4px;
    height: 48px;
    margin-top: 28px;
    background: repeating-linear-gradient(90deg, #eee 0, #eee 1px, transparent 1px, transparent 3px);
}

.files {
    display: flex;
    flex-direction: column;
    width: 1033px;
    flex: none;
}

.file-head,
.file-row {
    display: grid;
    grid-template-columns: 515px 102px 215px 201px;
}

.file-head {
    height: 38px;
    flex: none;
    font-weight: bold;
    font-size: 21px;
    line-height: 40px;
    white-space: nowrap;
}

.file-head div {
    background: linear-gradient(#eaeaea, #dedede);
    border: 2px solid #c4c4c4;
    border-left: none;
    overflow: hidden;
}

.h-name {
    padding-left: 20px;
    border-left: 2px solid #c4c4c4;
}

.h-size,
.h-type,
.h-date {
    padding-left: 20px;
}

.file-rows {
    flex: 1;
    overflow: hidden;
    background-color: #fff;
    border-bottom: 3px solid #bdbdbd;
    white-space: nowrap;
}

.file-row {
    height: 40px;
    align-items: center;
}

.file-row.scrolled {
    margin-top: -23px;
}

.file-row > div {
    display: flex;
    align-items: center;
    height: 40px;
    overflow: hidden;
}

.file-row.selected .c-name {
    background-color: #b0d6fc;
}

.c-name {
    padding-left: 7px;
}

.c-size,
.c-date {
    padding-left: 4px;
}

.c-type {
    padding-left: 3px;
}

.ic-file {
    width: 28px;
    height: 28px;
    margin-right: 8px;
}

.dlg-scroll {
    flex: 1;
    width: auto;
    border-left: none;
    border-right: 2px solid #c4c4c4;
    border-bottom: 3px solid #bdbdbd;
    padding-top: 38px;
}

.dlg-scroll .sb-btn {
    height: 40px;
}

.dlg-scroll .sb-thumb {
    margin-top: 256px;
    height: 205px;
}

.dlg-name {
    height: 50px;
    margin-top: 15px;
    padding-left: 6px;
}

.dlg-filter {
    justify-content: space-between;
    height: 50px;
    margin-top: 13px;
    padding: 0 13px 0 8px;
}

.dlg-actions {
    display: flex;
    justify-content: flex-end;
    gap: 13px;
    margin-top: 14px;
}

.btn-open,
.btn-cancel {
    height: 65px;
}

.btn-open {
    width: 156px;
}

.btn-cancel {
    width: 171px;
}

.ic-btn {
    width: 48px;
    height: 40px;
    margin-right: 8px;
}

.ic-x {
    width: 44px;
    height: 44px;
    margin-right: 10px;
}
```
